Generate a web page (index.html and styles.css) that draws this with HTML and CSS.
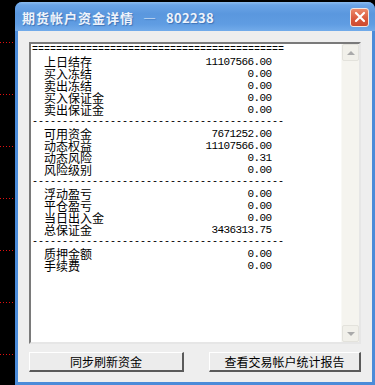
FILE: index.html
```html
<!DOCTYPE html>
<html lang="zh-CN">
<head>
    <meta charset="UTF-8">
    <meta name="viewport" content="width=device-width, initial-scale=1.0">
    <link rel="stylesheet" href="styles.css">
</head>
<body>
    <div class="rail">
        <i></i><i></i><i></i><i></i><i></i><i></i><i></i>
    </div>

    <div class="window">
        <div class="titlebar">
            <span class="title">期货帐户资金详情<span class="sep">—</span><span class="acct">802238</span></span>
            <span class="close">
                <svg width="12" height="12" viewBox="0 0 12 12"><path d="M2 2 L10 10 M10 2 L2 10" stroke="#fff" stroke-width="2.2" stroke-linecap="round"/></svg>
            </span>
        </div>

        <div class="client">
            <div class="report">
                <div class="text">
                    <div class="rule">==========================================</div>
                    <div class="row"><span>上日结存</span><span class="num">11107566.00</span></div>
                    <div class="row"><span>买入冻结</span><span class="num">0.00</span></div>
                    <div class="row"><span>卖出冻结</span><span class="num">0.00</span></div>
                    <div class="row"><span>买入保证金</span><span class="num">0.00</span></div>
                    <div class="row"><span>卖出保证金</span><span class="num">0.00</span></div>
                    <div class="rule">------------------------------------------</div>
                    <div class="row"><span>可用资金</span><span class="num">7671252.00</span></div>
                    <div class="row"><span>动态权益</span><span class="num">11107566.00</span></div>
                    <div class="row"><span>动态风险</span><span class="num">0.31</span></div>
                    <div class="row"><span>风险级别</span><span class="num">0.00</span></div>
                    <div class="rule">------------------------------------------</div>
                    <div class="row"><span>浮动盈亏</span><span class="num">0.00</span></div>
                    <div class="row"><span>平仓盈亏</span><span class="num">0.00</span></div>
                    <div class="row"><span>当日出入金</span><span class="num">0.00</span></div>
                    <div class="row"><span>总保证金</span><span class="num">3436313.75</span></div>
                    <div class="rule">------------------------------------------</div>
                    <div class="row"><span>质押金额</span><span class="num">0.00</span></div>
                    <div class="row"><span>手续费</span><span class="num">0.00</span></div>
                </div>
                <div class="scrollbar">
                    <div class="sb-btn"><span class="arrow up"></span></div>
                    <div class="track"></div>
                    <div class="sb-btn"><span class="arrow down"></span></div>
                </div>
            </div>

            <div class="actions">
                <button class="btn refresh">同步刷新资金</button>
                <button class="btn stats">查看交易帐户统计报告</button>
            </div>
        </div>
    </div>
</body>
</html>
```

FILE: styles.css
```css
body {
    margin: 0;
    height: 385px;
    overflow: hidden;
    display: flex;
    background: #000000;
    font-family: "Noto Sans CJK SC", "Liberation Sans", sans-serif;
}
.rail {
    width: 15px;
    padding-top: 42px;
    display: flex;
    flex-direction: column;
    gap: 51px;
}
.rail i {
    display: block;
    height: 1px;
    background: repeating-linear-gradient(to right, #e01010 0 1px, transparent 1px 3px);
}
.window {
    width: 360px;
    height: 383px;
    margin-top: 2px;
    display: flex;
    flex-direction: column;
    background: #4b8bd9;
    border-radius: 7px 7px 0 0;
}
.titlebar {
    height: 29px;
    padding: 0 6px 0 7px;
    display: flex;
    align-items: center;
    justify-content: space-between;
    border-radius: 7px 7px 0 0;
    background: linear-gradient(to bottom, #8cbcef 0, #6aa4e6 3px, #5a97de 12px, #5f9ce2 22px, #72abea 29px);
}
.title {
    color: #eef3fb;
    font-size: 13px;
    font-weight: bold;
    letter-spacing: 1px;
    text-shadow: 1px 1px 1px #3f74b8;
    margin-top: 1px;
}
.title .sep {
    margin: 0 9px;
}
.title .acct {
    letter-spacing: 0.3px;
}
.close {
    width: 19px;
    height: 19px;
    margin-top: 1px;
    box-sizing: border-box;
    display: flex;
    align-items: center;
    justify-content: center;
    border: 1px solid #f4e6e0;
    border-radius: 3px;
    background: linear-gradient(to bottom, #ec8a6a, #d9573a 60%, #cc4a30);
}
.client {
    flex: 1;
    margin: 0 3px 3px;
    padding: 11px 11px 10px;
    background: #eeeeee;
    display: flex;
    flex-direction: column;
}
.report {
    height: 302px;
    box-sizing: border-box;
    display: flex;
    background: #ffffff;
    border-style: solid;
    border-width: 2px;
    border-color: #7a7a7a #e6e6e6 #e6e6e6 #7a7a7a;
}
.text {
    flex: 1;
    padding-left: 1px;
    color: #000000;
    line-height: 12px;
}
.rule {
    font-family: "Liberation Mono", monospace;
    font-size: 10px;
    height: 12px;
    white-space: pre;
}
.row {
    width: 239px;
    height: 12px;
    box-sizing: border-box;
    padding-left: 12px;
    display: flex;
    justify-content: space-between;
    font-size: 12px;
}
.num {
    font-family: "Liberation Mono", monospace;
    font-size: 11px;
    letter-spacing: -0.6px;
    margin-right: -0.6px;
}
.scrollbar {
    width: 17px;
    display: flex;
    flex-direction: column;
    background: #f5f4ef;
    border-left: 1px solid #f9f9f6;
}
.track {
    flex: 1;
}
.sb-btn {
    height: 17px;
    box-sizing: border-box;
    display: flex;
    align-items: center;
    justify-content: center;
    border: 1px solid #e3e2dc;
    border-radius: 2px;
    background: #f1f0ea;
}
.arrow {
    width: 0;
    height: 0;
    border-left: 4px solid transparent;
    border-right: 4px solid transparent;
}
.arrow.up {
    border-bottom: 4px solid #aaaaaa;
}
.arrow.down {
    border-top: 4px solid #aaaaaa;
}
.actions {
    margin-top: 8px;
    display: flex;
    justify-content: space-between;
}
.btn {
    height: 20px;
    padding: 0;
    box-sizing: border-box;
    font-family: "Noto Sans CJK SC", sans-serif;
    font-size: 12px;
    color: #000000;
    background: #ececec;
    border-style: solid;
    border-width: 1px 2px 2px 1px;
    border-color: #ffffff #5a5a5a #5a5a5a #ffffff;
}
.btn.refresh {
    width: 155px;
}
.btn.stats {
    width: 152px;
}
```
